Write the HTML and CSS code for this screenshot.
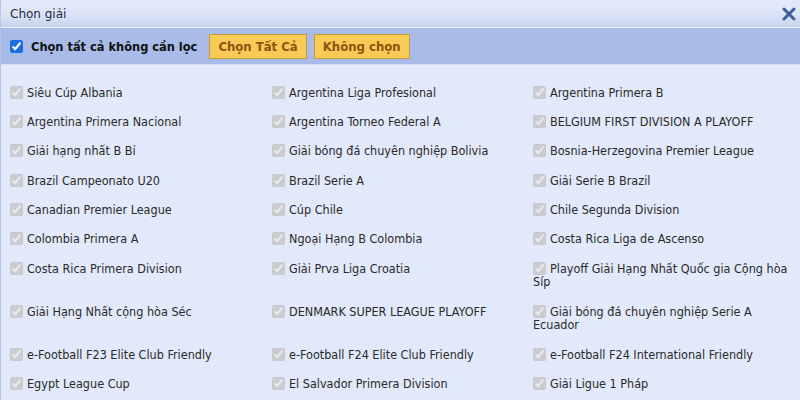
FILE: index.html
```html
<!DOCTYPE html>
<html lang="vi">
<head>
    <meta charset="UTF-8">
    <meta name="viewport" content="width=device-width, initial-scale=1.0">
    <title>Chọn giải</title>
    <link rel="stylesheet" href="styles.css">
</head>
<body>
    <div class="dialog">
        <header class="titlebar">
            <span class="title">Chọn giải</span>
            <button class="close" title="Đóng">
                <svg width="14" height="14" viewBox="0 0 14 14">
                    <path d="M2 2 L12 12 M12 2 L2 12" stroke="#3d5d9b" stroke-width="3" stroke-linecap="round"/>
                </svg>
            </button>
        </header>

        <div class="toolbar">
            <label class="select-all">
                <input type="checkbox" checked>
                <span>Chọn tất cả không cần lọc</span>
            </label>
            <button class="btn">Chọn Tất Cả</button>
            <button class="btn">Không chọn</button>
        </div>

        <!-- League list -->
        <div class="league-list">
            <label class="league"><input type="checkbox" checked disabled>Siêu Cúp Albania</label>
            <label class="league"><input type="checkbox" checked disabled>Argentina Liga Profesional</label>
            <label class="league"><input type="checkbox" checked disabled>Argentina Primera B</label>

            <label class="league"><input type="checkbox" checked disabled>Argentina Primera Nacional</label>
            <label class="league"><input type="checkbox" checked disabled>Argentina Torneo Federal A</label>
            <label class="league"><input type="checkbox" checked disabled>BELGIUM FIRST DIVISION A PLAYOFF</label>

            <label class="league"><input type="checkbox" checked disabled>Giải hạng nhất B Bỉ</label>
            <label class="league"><input type="checkbox" checked disabled>Giải bóng đá chuyên nghiệp Bolivia</label>
            <label class="league"><input type="checkbox" checked disabled>Bosnia-Herzegovina Premier League</label>

            <label class="league"><input type="checkbox" checked disabled>Brazil Campeonato U20</label>
            <label class="league"><input type="checkbox" checked disabled>Brazil Serie A</label>
            <label class="league"><input type="checkbox" checked disabled>Giải Serie B Brazil</label>

            <label class="league"><input type="checkbox" checked disabled>Canadian Premier League</label>
            <label class="league"><input type="checkbox" checked disabled>Cúp Chile</label>
            <label class="league"><input type="checkbox" checked disabled>Chile Segunda Division</label>

            <label class="league"><input type="checkbox" checked disabled>Colombia Primera A</label>
            <label class="league"><input type="checkbox" checked disabled>Ngoại Hạng B Colombia</label>
            <label class="league"><input type="checkbox" checked disabled>Costa Rica Liga de Ascenso</label>

            <label class="league"><input type="checkbox" checked disabled>Costa Rica Primera Division</label>
            <label class="league"><input type="checkbox" checked disabled>Giải Prva Liga Croatia</label>
            <label class="league"><input type="checkbox" checked disabled>Playoff Giải Hạng Nhất Quốc gia Cộng hòa Síp</label>

            <label class="league"><input type="checkbox" checked disabled>Giải Hạng Nhất cộng hòa Séc</label>
            <label class="league"><input type="checkbox" checked disabled>DENMARK SUPER LEAGUE PLAYOFF</label>
            <label class="league"><input type="checkbox" checked disabled>Giải bóng đá chuyên nghiệp Serie A Ecuador</label>

            <label class="league"><input type="checkbox" checked disabled>e-Football F23 Elite Club Friendly</label>
            <label class="league"><input type="checkbox" checked disabled>e-Football F24 Elite Club Friendly</label>
            <label class="league"><input type="checkbox" checked disabled>e-Football F24 International Friendly</label>

            <label class="league"><input type="checkbox" checked disabled>Egypt League Cup</label>
            <label class="league"><input type="checkbox" checked disabled>El Salvador Primera Division</label>
            <label class="league"><input type="checkbox" checked disabled>Giải Ligue 1 Pháp</label>
        </div>
    </div>
</body>
</html>
```

FILE: styles.css
```css
/* Reset */
* {
    margin: 0;
    padding: 0;
    box-sizing: border-box;
}

body {
    font-family: 'DejaVu Sans Condensed', 'DejaVu Sans', sans-serif;
    font-stretch: condensed;
    font-size: 12.5px;
    color: #222;
    background-color: #e1e9fa;
    overflow: hidden;
}

.dialog {
    width: 800px;
    height: 400px;
    border-left: 1px solid #b9c7e6;
    background-color: #e1e9fa;
}

/* Title bar */
.titlebar {
    height: 28px;
    display: flex;
    align-items: center;
    justify-content: space-between;
    padding: 0 2px 0 9px;
    background: linear-gradient(to bottom, #e3eafa 0%, #dbe4f7 55%, #c6d3ef 100%);
    border-bottom: 1px solid #eef2fc;
}

.title {
    font-family: 'DejaVu Sans', sans-serif;
    font-stretch: normal;
    font-size: 12px;
    color: #1e2a44;
}

.close {
    background: none;
    border: none;
    cursor: pointer;
    width: 18px;
    height: 18px;
    display: flex;
    align-items: center;
    justify-content: center;
    margin-top: 1px;
}

/* Toolbar */
.toolbar {
    height: 37px;
    display: flex;
    align-items: center;
    padding: 0 9px;
    background-color: #a9bbe8;
    border-bottom: 1px solid #d5def4;
}

.select-all {
    display: flex;
    align-items: center;
    gap: 8px;
    font-weight: bold;
    font-size: 12.7px;
    color: #111;
    margin-right: 12px;
}

.select-all input {
    width: 13px;
    height: 13px;
    accent-color: #1a6fe0;
}

.btn {
    font-family: inherit;
    font-stretch: condensed;
    font-size: 13px;
    font-weight: bold;
    color: #8a5610;
    background-color: #f8cb56;
    border: 1px solid #c69c33;
    height: 25px;
    padding: 0 8px;
    margin-right: 7px;
    cursor: pointer;
}

/* League list */
.league-list {
    display: grid;
    grid-template-columns: 262px 261px 261px;
    align-items: start;
    padding: 13px 0 0 9px;
}

.league {
    display: block;
    line-height: 13.7px;
    padding: 7.8px 0;
    color: #2a2a2a;
}

.league input {
    width: 13px;
    height: 13px;
    margin-right: 4px;
    vertical-align: top;
}
```
